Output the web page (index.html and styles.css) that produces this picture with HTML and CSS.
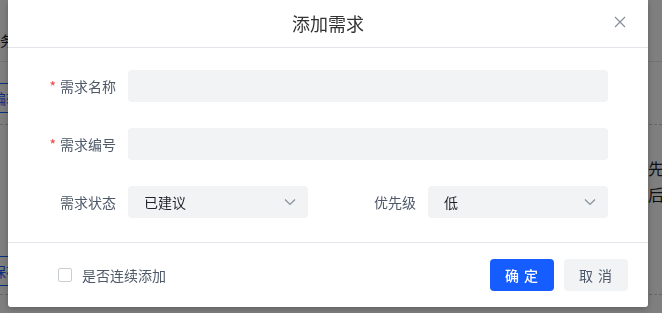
FILE: index.html
```html
<!DOCTYPE html>
<html lang="zh-CN">
<head>
  <meta charset="UTF-8" />
  <meta name="viewport" content="width=device-width, initial-scale=1" />
  <title>添加需求</title>
  <link rel="stylesheet" href="styles.css">
</head>
<body>

<div class="page">
  <div class="page-head"><span class="head-text">服务</span></div>
  <div class="page-row">
    <span class="bg-btn">编辑</span>
  </div>
  <div class="page-row tall">
    <span class="bg-btn">保存</span>
    <div class="bg-note">
      <span>优先级</span>
      <span>最后修改</span>
    </div>
  </div>
</div>

<div class="mask"></div>

<div class="modal">
  <div class="modal-header">
    <h2>添加需求</h2>
    <span class="close">
      <svg width="12" height="12" viewBox="0 0 12 12"><path d="M1 1 L11 11 M11 1 L1 11" stroke="#86909c" stroke-width="1.2" fill="none"/></svg>
    </span>
  </div>

  <form class="modal-body" id="formAdd">
    <div class="field">
      <label for="nome"><i>*</i>需求名称</label>
      <input type="text" id="nome" />
    </div>
    <div class="field">
      <label for="codigo"><i>*</i>需求编号</label>
      <input type="text" id="codigo" />
    </div>
    <div class="field-pair">
      <div class="field">
        <label>需求状态</label>
        <div class="select">
          <span>已建议</span>
          <svg width="12" height="8" viewBox="0 0 12 8"><path d="M1 1.5 L6 6.5 L11 1.5" stroke="#86909c" stroke-width="1.2" fill="none"/></svg>
        </div>
      </div>
      <div class="field">
        <label>优先级</label>
        <div class="select">
          <span>低</span>
          <svg width="12" height="8" viewBox="0 0 12 8"><path d="M1 1.5 L6 6.5 L11 1.5" stroke="#86909c" stroke-width="1.2" fill="none"/></svg>
        </div>
      </div>
    </div>
  </form>

  <div class="modal-footer">
    <label class="check"><span class="box"></span>是否连续添加</label>
    <div class="actions">
      <button class="btn-ok">确 定</button>
      <button class="btn-cancel">取 消</button>
    </div>
  </div>
</div>

</body>
</html>
```

FILE: styles.css
```css
body {
  margin: 0;
  background-color: #fff;
  font-family: "Noto Sans CJK SC", "Liberation Sans", sans-serif;
  font-size: 14px;
  color: #1d2129;
  overflow: hidden;
}
.page {
  width: 662px;
}
.page-head {
  height: 62px;
  border-bottom: 1px solid #e5e6eb;
  box-sizing: border-box;
  padding-top: 30px;
}
.head-text {
  margin-left: -14px;
  color: #1d2129;
}
.page-row {
  height: 63px;
  border-bottom: 1px dashed #c9cdd4;
  box-sizing: border-box;
  display: flex;
  align-items: center;
  padding-top: 9px;
}
.page-row.tall {
  height: 170px;
  align-items: flex-end;
  justify-content: space-between;
  padding: 0 0 8px 0;
}
.bg-btn {
  margin-left: -22px;
  padding: 4px 14px;
  border-top: 1px solid #165dff;
  border-bottom: 1px solid #165dff;
  color: #165dff;
  line-height: 20px;
}
.bg-note {
  align-self: flex-start;
  margin-top: 30px;
  margin-right: -34px;
  width: 64px;
  display: flex;
  flex-direction: column;
  font-size: 16px;
  line-height: 26px;
  color: #1d2129;
  white-space: nowrap;
}
.mask {
  position: fixed;
  inset: 0;
  background-color: rgba(0, 0, 0, 0.5);
}
.modal {
  position: absolute;
  top: 0;
  left: 8px;
  width: 640px;
  background-color: #fff;
  border-radius: 0 0 3px 3px;
  box-shadow: 0 2px 6px rgba(0, 0, 0, 0.25);
}
.modal-header {
  height: 47px;
  border-bottom: 1px solid #e5e6eb;
  display: flex;
  align-items: center;
  justify-content: center;
  position: relative;
}
.modal-header h2 {
  margin: 0;
  font-size: 18px;
  font-weight: 400;
  color: #333;
  line-height: 24px;
  margin-top: -2px;
}
.close {
  position: absolute;
  right: 22px;
  top: 16px;
  display: flex;
}
.modal-body {
  padding: 22px 40px 24px 40px;
  display: flex;
  flex-direction: column;
  gap: 26px;
}
.field {
  display: flex;
  align-items: center;
}
.field label {
  width: 68px;
  padding-right: 12px;
  text-align: right;
  color: #4e5969;
  white-space: nowrap;
}
.field label i {
  font-style: normal;
  color: #f53f3f;
  margin-right: 4px;
}
.field input {
  flex: 1;
  height: 32px;
  border: none;
  border-radius: 4px;
  background-color: #f2f3f5;
  padding: 0 12px;
  box-sizing: border-box;
  margin: 0;
}
.field-pair {
  display: grid;
  grid-template-columns: 1fr 1fr;
  gap: 40px;
}
.select {
  flex: 1;
  height: 32px;
  border-radius: 4px;
  background-color: #f2f3f5;
  padding: 0 12px 0 16px;
  display: flex;
  align-items: center;
  justify-content: space-between;
  color: #1d2129;
}
.modal-footer {
  border-top: 1px solid #e5e6eb;
  padding: 16px 20px 16px 50px;
  display: flex;
  align-items: center;
  justify-content: space-between;
}
.check {
  display: flex;
  align-items: center;
  gap: 10px;
  color: #4e5969;
}
.box {
  width: 12px;
  height: 12px;
  border: 1px solid #c9cdd4;
  border-radius: 2px;
}
.actions {
  display: flex;
  gap: 10px;
}
.actions button {
  width: 64px;
  height: 32px;
  border: none;
  border-radius: 4px;
  font-family: inherit;
  font-size: 14px;
  letter-spacing: 1px;
  cursor: pointer;
}
.btn-ok {
  background-color: #165dff;
  color: #fff;
  font-weight: 500;
}
.btn-cancel {
  background-color: #f2f3f5;
  color: #4e5969;
}
```
